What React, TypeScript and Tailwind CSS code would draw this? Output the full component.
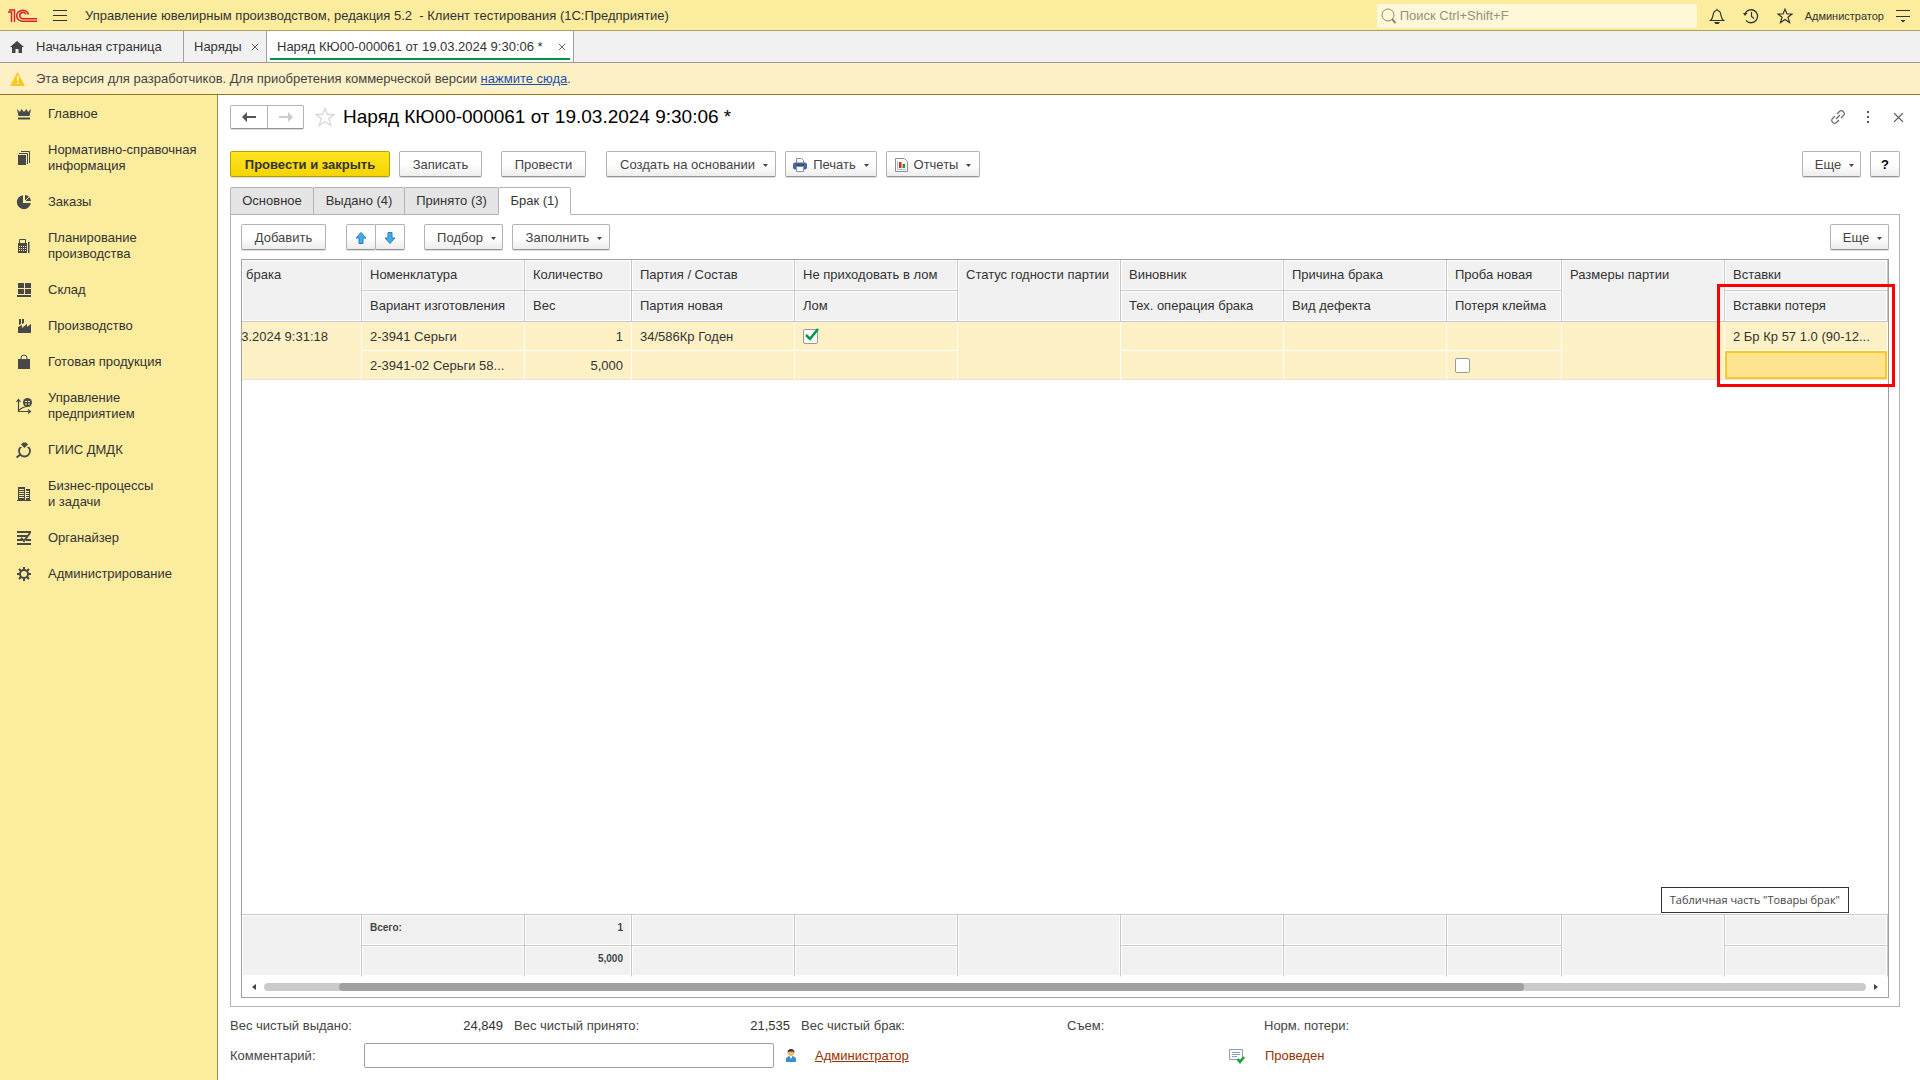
import type { ReactNode } from "react";
import clsx from "clsx";

const buttonClass =
  "flex h-[26px] shrink-0 items-center justify-center rounded-xs border border-[#b3b3b3] border-b-[#959595] bg-linear-to-b from-white from-50% to-[#ededed] pt-px text-[#444] shadow-[0_1px_0_#dcdcdc]";

const Caret = () => (
  <svg width="5" height="3" viewBox="0 0 5 3" className="mt-0.5 ml-2 shrink-0" fill="#444">
    <path d="M0 0h5L2.5 3z" />
  </svg>
);

interface ButtonProps {
  width: string;
  children: ReactNode;
  menu?: boolean;
  label?: string;
}

const Button = ({ width, children, menu, label }: ButtonProps) => (
  <button type="button" aria-label={label} className={clsx(buttonClass, width, menu && "pl-1.5")}>
    {children}
    {menu && <Caret />}
  </button>
);

interface MenuItem {
  lines: string[];
  icon: ReactNode;
}

const menuItems: MenuItem[] = [
  {
    lines: ["Главное"],
    icon: (
      <>
        <path d="M1 3l3 3 1.500-3L8 6l2.500-3L12 6l3-3-1.500 7h-11z" />
        <path d="M2 11.500h12v2H2z" />
      </>
    ),
  },
  {
    lines: ["Нормативно-справочная", "информация"],
    icon: (
      <>
        <path d="M2 5h8v10H2z" />
        <path d="M3 3.500h8.500V14M5 1.500h8.500V13" fill="none" stroke="#484848" />
      </>
    ),
  },
  {
    lines: ["Заказы"],
    icon: (
      <>
        <path d="M7 1.200V9h7.8A7 7 0 1 1 7 1.200z" />
        <path d="M9 1a6 6 0 0 1 5.800 6H9z" />
        <path d="M9 7l4-4" stroke="#fbec9e" />
      </>
    ),
  },
  {
    lines: ["Планирование", "производства"],
    icon: (
      <>
        <path d="M3.500 6V1.500h6V6" fill="none" stroke="#484848" />
        <path d="M2 5h9v10H2z" />
        <path d="M12 4h1.500v11H12z" />
        <path d="M3 8h1v1H3zm2 0h1v1H5zm2 0h1v1H7zm2 0h1v1H9zm-6 2h1v1H3zm2 0h1v1H5zm2 0h1v1H7zm2 0h1v1H9zm-6 2h1v1H3zm2 0h1v1H5zm2 0h1v1H7zm2 0h1v1H9z" fill="#fbec9e" />
      </>
    ),
  },
  {
    lines: ["Склад"],
    icon: <path d="M2 1h6v5H2zm7 0h6v5H9zM2 7h6v5H2zm7 0h6v5H9zM1 13h14v2H1z" />,
  },
  {
    lines: ["Производство"],
    icon: <path d="M2 15V9l4-2v3l5-4v3l4-3v9zM3 1h2v5L3 7zm3 0h2v4L6 6z" />,
  },
  {
    lines: ["Готовая продукция"],
    icon: (
      <>
        <path d="M2 5h12v10H2z" />
        <path d="M5 7V4a3 3 0 0 1 6 0v3" fill="none" stroke="#484848" />
      </>
    ),
  },
  {
    lines: ["Управление", "предприятием"],
    icon: (
      <>
        <path d="M2.500 1.500v12H14M.500 4l2-2.500 2 2.500M12 11.500l2.500 2-2.500 2M3 12l4-2.500L12 8" fill="none" stroke="#484848" strokeWidth="1.200" />
        <circle cx="11.500" cy="4.500" r="4.500" />
        <path d="M9 3h2v1H9zm3 0h2v1h-2zM9 5.500h2v1H9zm3 0h2v1h-2z" fill="#fbec9e" />
      </>
    ),
  },
  {
    lines: ["ГИИС ДМДК"],
    icon: (
      <>
        <circle cx="8.500" cy="9" r="5.500" fill="none" stroke="#484848" strokeWidth="1.800" />
        <path d="M4 3h9v2H4z" fill="#fbec9e" />
        <path d="M5 2.500L7 .500h3l2 2L8.500 6z" />
        <path d="M4.500 12.500L.500 15.500" stroke="#484848" strokeWidth="2" />
      </>
    ),
  },
  {
    lines: ["Бизнес-процессы", "и задачи"],
    icon: (
      <>
        <path d="M2 1h7v14H2zM10 3h4v12h-4zM1 14h14v1H1z" />
        <path d="M3 3h5v1H3zm0 2h5v1H3zm0 2h5v1H3zm0 2h5v1H3zm0 2h5v1H3zm7-6h3v1h-3zm0 2h3v1h-3zm0 2h3v1h-3zm0 2h3v1h-3z" fill="#fbec9e" />
      </>
    ),
  },
  {
    lines: ["Органайзер"],
    icon: (
      <>
        <path d="M1 1h14v2H1zM1 5h10v2H1zM1 9h5v2H1zM10 9h5v2h-5zM1 13h14v2H1z" />
        <path d="M5 8l3 3 6-8" fill="none" stroke="#484848" strokeWidth="2" />
      </>
    ),
  },
  {
    lines: ["Администрирование"],
    icon: (
      <>
        <circle cx="8" cy="8" r="4" fill="none" stroke="#484848" strokeWidth="2" />
        <path d="M8 1v3M8 12v3M1 8h3M12 8h3M3 3l2 2M11 11l2 2M13 3l-2 2M5 11l-2 2" stroke="#484848" strokeWidth="2" />
      </>
    ),
  },
];

const TopBar = () => (
  <header className="flex h-[31px] shrink-0 items-center border-b border-[#aaa15f] bg-[#fbec9e] pt-px pr-2.5 pl-2">
    <svg width="30" height="14" viewBox="0 0 30 14" fill="none" stroke="#d8202a" strokeWidth="1.500" aria-label="1С">
      <path d="M0 3h3.500v10M1 1h5.500v12" />
      <path d="M20.500 5.500a6 5.500 0 1 0-5.500 6.800h14" />
      <path d="M18 5.500a3.200 3.200 0 1 0-3 4.300h14" />
    </svg>
    <button type="button" aria-label="Меню" className="ml-[15px]">
      <svg width="14" height="12" viewBox="0 0 14 12" stroke="#333">
        <path d="M0 .500h14M0 5.500h14M0 10.500h14" />
      </svg>
    </button>
    <span className="ml-[18px] flex-1 whitespace-pre text-[#333]">
      {"Управление ювелирным производством, редакция 5.2  - Клиент тестирования (1С:Предприятие)"}
    </span>
    <label className="mr-3 flex h-6 w-80 items-center gap-1 rounded-xs bg-[#fef7d8] pl-1">
      <svg width="15" height="16" viewBox="0 0 15 16" fill="none" stroke="#8f8a73">
        <circle cx="7" cy="7" r="6" />
        <path d="M11 11l3.500 4" strokeWidth="2" />
      </svg>
      <input
        type="text"
        aria-label="Поиск"
        placeholder="Поиск Ctrl+Shift+F"
        className="min-w-0 flex-1 outline-none placeholder:text-[#96927f]"
      />
    </label>
    <button type="button" aria-label="Оповещения">
      <svg width="16" height="16" viewBox="0 0 16 16" fill="none" stroke="#333" strokeWidth="1.200">
        <path d="M1.500 12.500h13c-3-2-2-6-3.500-8.500-.800-1.200-2-1-3-2.500-1 1.500-2.200 1.300-3 2.500C3.500 6.500 4.500 10.500 1.500 12.500z" />
        <path d="M5 14h6l-1.500 2h-3z" fill="#333" stroke="none" />
      </svg>
    </button>
    <button type="button" aria-label="История" className="ml-[18px]">
      <svg width="16" height="16" viewBox="0 0 16 16" fill="none" stroke="#333">
        <path d="M2 6a6.500 6.500 0 1 1 1 6.300" strokeWidth="1.300" />
        <path d="M8.500 4v4.500l2.500 2" strokeWidth="1.200" />
        <path d="M0 5h4.500L2 8z" fill="#333" stroke="none" />
      </svg>
    </button>
    <button type="button" aria-label="Избранное" className="ml-[18px]">
      <svg width="16" height="16" viewBox="0 0 16 16" fill="none" stroke="#333" strokeWidth="1.200">
        <path d="M8 1.200l2 4.800h5l-4 3.300 1.500 5.200L8 11.500l-4.500 3L5 9.300 1 6h5z" />
      </svg>
    </button>
    <span className="ml-3 text-[11px] text-[#333]">Администратор</span>
    <button type="button" aria-label="Настройки" className="ml-3">
      <svg width="14" height="14" viewBox="0 0 14 14" stroke="#333">
        <path d="M0 1.500h14M0 7.500h14" />
        <path d="M4.500 11h5L7 13.500z" fill="#333" stroke="none" />
      </svg>
    </button>
  </header>
);

const CloseIcon = ({ size }: { size: number }) => (
  <svg width={size} height={size} viewBox="0 0 10 10" stroke="#555" strokeWidth="1.100">
    <path d="M1 1l8 8M9 1L1 9" />
  </svg>
);

const WindowTabs = () => (
  <nav className="flex h-8 shrink-0 border-b border-[#999] bg-[#f1f1f1] text-[#333]">
    <button type="button" className="flex w-[184px] items-center gap-3 border-r border-[#a0a0a0] pl-2.5">
      <svg width="14" height="14" viewBox="0 0 14 14" fill="#444">
        <path d="M7 1l7 6h-2v6H8.500V9h-3v4H2V7H0z" />
      </svg>
      Начальная страница
    </button>
    <div className="flex w-[83px] items-center justify-between border-r border-[#a0a0a0] pr-[7px] pl-2.5">
      <button type="button">Наряды</button>
      <button type="button" aria-label="Закрыть Наряды">
        <CloseIcon size={8} />
      </button>
    </div>
    <div className="flex w-[307px] border-r border-[#a0a0a0] bg-white px-[3px]">
      <div className="mb-0.5 flex flex-1 items-center justify-between border-b-2 border-[#009646] pt-1 pr-1 pl-[7px]">
        <button type="button">Наряд КЮ00-000061 от 19.03.2024 9:30:06 *</button>
        <button type="button" aria-label="Закрыть Наряд">
          <CloseIcon size={8} />
        </button>
      </div>
    </div>
  </nav>
);

const Notice = () => (
  <div className="flex h-8 shrink-0 items-center border-b border-[#947a1e] bg-[#fff1c6] pl-2.5 text-[#444]">
    <svg width="15" height="14" viewBox="0 0 15 14" className="mr-[11px]">
      <path d="M7.500 0L15 14H0z" fill="#fcc81e" />
      <path d="M7 4h1.500v5H7zM7 10.500h1.500V12H7z" fill="#fff" />
    </svg>
    <p>
      Эта версия для разработчиков. Для приобретения коммерческой версии{" "}
      <a href="#" className="text-[#1a4fb0] underline">
        нажмите сюда
      </a>
      .
    </p>
  </div>
);

const Sidebar = () => (
  <nav className="w-[218px] shrink-0 border-r border-[#958b51] bg-[#fbec9e] pt-px text-[#333]">
    {menuItems.map((item) => (
      <a key={item.lines[0]} href="#" className="flex items-center gap-4 py-2.5 pl-4">
        <svg width="16" height="16" viewBox="0 0 16 16" fill="#484848" className="shrink-0">
          {item.icon}
        </svg>
        <span>
          {item.lines.map((line) => (
            <span key={line} className="block">
              {line}
            </span>
          ))}
        </span>
      </a>
    ))}
  </nav>
);

const FormHeader = () => (
  <div className="flex items-center">
    <div className="flex h-6 rounded-xs border border-[#b3b3b3] border-b-[#959595] shadow-[0_1px_0_#dcdcdc]">
      <button type="button" aria-label="Назад" className="grid w-[37px] place-items-center border-r border-[#b3b3b3]">
        <svg width="14" height="10" viewBox="0 0 14 10" fill="#555">
          <path d="M0 5l5-5v4h9v2H5v4z" />
        </svg>
      </button>
      <button type="button" aria-label="Вперед" className="grid w-[35px] place-items-center">
        <svg width="14" height="10" viewBox="0 0 14 10" fill="#ccc">
          <path d="M14 5L9 0v4H0v2h9v4z" />
        </svg>
      </button>
    </div>
    <button type="button" aria-label="В избранное" className="ml-[11px]">
      <svg width="20" height="20" viewBox="0 0 20 20" fill="none" stroke="#d8d8d8" strokeWidth="1.300">
        <path d="M10 1.500l2.500 6H19l-5.200 4.200 2 6.800L10 14.500l-5.800 4 2-6.800L1 7.500h6.500z" />
      </svg>
    </button>
    <h1 className="ml-2 flex-1 text-[19px] leading-6 text-black">Наряд КЮ00-000061 от 19.03.2024 9:30:06 *</h1>
    <div className="-mr-1 flex items-center">
      <button type="button" aria-label="Ссылка">
        <svg width="16" height="16" viewBox="0 0 16 16" fill="none" stroke="#666" strokeWidth="1.200">
          <path d="M7 5l3-3a3 3 0 0 1 4 4l-3 3M9 11l-3 3a3 3 0 0 1-4-4l3-3M6 10l4-4" />
        </svg>
      </button>
      <button type="button" aria-label="Действия" className="ml-5">
        <svg width="4" height="12" viewBox="0 0 4 12" fill="#555">
          <path d="M1 0h2v2H1zm0 5h2v2H1zm0 5h2v2H1z" />
        </svg>
      </button>
      <button type="button" aria-label="Закрыть" className="ml-[23px]">
        <CloseIcon size={11} />
      </button>
    </div>
  </div>
);

const CommandBar = () => (
  <div className="mt-[22px] flex">
    <button
      type="button"
      className="h-[26px] w-40 shrink-0 rounded-xs border border-[#b59e00] bg-linear-to-b from-[#ffe51e] to-[#f5d400] pt-px font-bold text-[#333] shadow-[0_1px_0_#dcdcdc]"
    >
      Провести и закрыть
    </button>
    <div className="ml-[9px] flex">
      <Button width="w-[83px]">Записать</Button>
    </div>
    <div className="ml-[19px] flex">
      <Button width="w-[85px]">Провести</Button>
    </div>
    <div className="ml-5 flex gap-[9px]">
      <Button width="w-[170px]" menu>
        Создать на основании
      </Button>
      <Button width="w-[92px]" menu>
        <svg width="14" height="14" viewBox="0 0 14 14" className="mr-1.5 -ml-1.5 shrink-0">
          <path d="M3.500 5V.500h5l2 2V5" fill="#fff" stroke="#8391a3" />
          <rect y="4.500" width="14" height="7" rx="2" fill="#446c99" />
          <path d="M3 7h8" stroke="#223b5c" />
          <path d="M3.500 8.500h7v5h-7z" fill="#fff" stroke="#8391a3" />
        </svg>
        Печать
      </Button>
      <Button width="w-[94px]" menu>
        <svg width="13" height="14" viewBox="0 0 13 14" className="mr-1.5 -ml-1.5 shrink-0">
          <path d="M.500 .500h9l3 3v10H.500z" fill="#fff" stroke="#8391a3" />
          <path d="M2.500 3v8.500H11" fill="none" stroke="#b8c0c9" />
          <path d="M4 4h2.500v6H4z" fill="#e8251f" />
          <path d="M7.500 6H10v4H7.500z" fill="#1c9a33" />
        </svg>
        Отчеты
      </Button>
    </div>
    <div className="ml-auto flex gap-[9px]">
      <Button width="w-[59px]" menu>
        Еще
      </Button>
      <Button width="w-[30px]" label="Справка">
        <span className="font-bold text-black">?</span>
      </Button>
    </div>
  </div>
);

const formTabs = [
  { title: "Основное", width: "w-[84px]" },
  { title: "Выдано (4)", width: "w-[92px]" },
  { title: "Принято (3)", width: "w-[95px]" },
  { title: "Брак (1)", width: "w-[73px]", active: true },
];

const FormTabs = () => (
  <div role="tablist" className="relative z-10 mt-2.5 -mb-px flex">
    {formTabs.map((tab) => (
      <button
        key={tab.title}
        type="button"
        role="tab"
        aria-selected={Boolean(tab.active)}
        className={clsx(
          "-mr-px h-7 rounded-t-xs border border-[#b3b3b3] text-[#333]",
          tab.width,
          tab.active ? "border-b-white bg-white" : "bg-[#e5e5e5]",
        )}
      >
        {tab.title}
      </button>
    ))}
  </div>
);

const TableBar = () => (
  <div className="flex">
    <Button width="w-[85px]">Добавить</Button>
    <div className="ml-5 flex">
      <Button width="w-[30px]" label="Переместить вверх">
        <svg width="12" height="12" viewBox="0 0 12 12" fill="#41adeb" stroke="#2b7fb5">
          <path d="M6 .500L11 6H8v5.500H4V6H1z" />
        </svg>
      </Button>
      <div className="-ml-px flex">
        <Button width="w-[30px]" label="Переместить вниз">
          <svg width="12" height="12" viewBox="0 0 12 12" fill="#41adeb" stroke="#2b7fb5">
            <path d="M6 11.500L1 6h3V.500h4V6h3z" />
          </svg>
        </Button>
      </div>
    </div>
    <div className="ml-[19px] flex gap-[9px]">
      <Button width="w-[79px]" menu>
        Подбор
      </Button>
      <Button width="w-[98px]" menu>
        Заполнить
      </Button>
    </div>
    <div className="ml-auto flex">
      <Button width="w-[59px]" menu>
        Еще
      </Button>
    </div>
  </div>
);

interface Column {
  top: string;
  bottom?: string;
}

const columns: Column[] = [
  { top: "брака" },
  { top: "Номенклатура", bottom: "Вариант изготовления" },
  { top: "Количество", bottom: "Вес" },
  { top: "Партия / Состав", bottom: "Партия новая" },
  { top: "Не приходовать в лом", bottom: "Лом" },
  { top: "Статус годности партии" },
  { top: "Виновник", bottom: "Тех. операция брака" },
  { top: "Причина брака", bottom: "Вид дефекта" },
  { top: "Проба новая", bottom: "Потеря клейма" },
  { top: "Размеры партии" },
  { top: "Вставки", bottom: "Вставки потеря" },
];

const Columns = () => (
  <colgroup>
    <col className="w-[120px]" />
    <col className="w-[163px]" />
    <col className="w-[107px]" />
    <col className="w-[163px]" />
    <col className="w-[163px]" />
    <col className="w-[163px]" />
    <col className="w-[163px]" />
    <col className="w-[163px]" />
    <col className="w-[115px]" />
    <col className="w-[163px]" />
    <col className="w-[163px]" />
  </colgroup>
);

const tableClass = "w-full table-fixed border-separate border-spacing-0";
const headClass =
  "h-[31px] overflow-hidden border-r border-b border-[#c8c8c8] bg-[#f1f1f1] px-2 text-left font-normal whitespace-nowrap text-[#333] shadow-[inset_0_0_0_1px_#fff]";
const bodyClass =
  "h-[29px] truncate border-r border-b border-white bg-[#fff1c6] px-2 pt-px pb-0 text-[#333]";
const lastRowClass = "border-b-[#e3e3e3]";
const footClass =
  "h-[31px] border-r border-b border-[#c8c8c8] bg-[#f1f1f1] px-2 pb-1 text-[10px] font-bold text-[#444] shadow-[inset_0_0_0_1px_#fff]";

const Tick = ({ label, checked }: { label: string; checked?: boolean }) => (
  <span className="relative block size-[15px]">
    <input
      type="checkbox"
      aria-label={label}
      defaultChecked={checked}
      className="block size-[15px] appearance-none rounded-xs border border-[#999] bg-white"
    />
    {checked && (
      <svg width="15" height="15" viewBox="0 0 15 15" className="pointer-events-none absolute -top-px left-px" fill="none">
        <path d="M2 7l4 4 8-10" stroke="#009646" strokeWidth="2.500" />
      </svg>
    )}
  </span>
);

const GoodsTable = () => (
  <table className={tableClass}>
    <Columns />
    <thead>
      <tr>
        {columns.map((column, index) => (
          <th
            key={column.top}
            rowSpan={column.bottom ? 1 : 2}
            className={clsx(headClass, !column.bottom && "align-top leading-[29px]", index === 0 && "pl-1")}
          >
            {column.top}
          </th>
        ))}
      </tr>
      <tr>
        {columns
          .filter((column) => column.bottom)
          .map((column) => (
            <th key={column.bottom} className={headClass}>
              {column.bottom}
            </th>
          ))}
      </tr>
    </thead>
    <tbody>
      <tr>
        <td rowSpan={2} className={clsx(bodyClass, lastRowClass, "pl-0 align-top")}>
          <div className="flex w-[86px] justify-end overflow-hidden leading-7 whitespace-nowrap">3.2024 9:31:18</div>
        </td>
        <td className={bodyClass}>2-3941 Серьги</td>
        <td className={clsx(bodyClass, "text-right")}>1</td>
        <td className={bodyClass}>34/586Кр Годен</td>
        <td className={bodyClass}>
          <Tick label="Не приходовать в лом" checked />
        </td>
        <td rowSpan={2} className={clsx(bodyClass, lastRowClass)} />
        <td className={bodyClass} />
        <td className={bodyClass} />
        <td className={bodyClass} />
        <td rowSpan={2} className={clsx(bodyClass, lastRowClass)} />
        <td className={bodyClass}>2 Бр Кр 57 1.0 (90-12...</td>
      </tr>
      <tr>
        <td className={clsx(bodyClass, lastRowClass)}>2-3941-02 Серьги 58...</td>
        <td className={clsx(bodyClass, lastRowClass, "text-right")}>5,000</td>
        <td className={clsx(bodyClass, lastRowClass)} />
        <td className={clsx(bodyClass, lastRowClass)} />
        <td className={clsx(bodyClass, lastRowClass)} />
        <td className={clsx(bodyClass, lastRowClass)} />
        <td className={clsx(bodyClass, lastRowClass)}>
          <Tick label="Потеря клейма" />
        </td>
        <td className="h-[29px] border-r border-b border-white border-b-[#e3e3e3] bg-[#ffe48f] shadow-[inset_0_0_0_2px_#fac823]" />
      </tr>
    </tbody>
  </table>
);

const totals: Record<string, [string, string]> = {
  Номенклатура: ["Всего:", ""],
  Количество: ["1", "5,000"],
};

const TotalsTable = () => (
  <table className={clsx(tableClass, "border-t border-[#c8c8c8]")}>
    <Columns />
    <tbody>
      <tr>
        {columns.map((column) => (
          <td
            key={column.top}
            rowSpan={column.bottom ? 1 : 2}
            className={clsx(
              footClass,
              column.top === "Количество" && "text-right",
              !column.bottom && "border-b-white",
            )}
          >
            {totals[column.top]?.[0]}
          </td>
        ))}
      </tr>
      <tr>
        {columns
          .filter((column) => column.bottom)
          .map((column) => (
            <td
              key={column.top}
              className={clsx(footClass, "border-b-white", column.top === "Количество" && "text-right")}
            >
              {totals[column.top]?.[1]}
            </td>
          ))}
      </tr>
    </tbody>
  </table>
);

const ScrollBar = () => (
  <div className="flex h-5 items-center gap-2 px-2.5">
    <svg width="4" height="6" viewBox="0 0 4 6" fill="#444">
      <path d="M4 0v6L0 3z" />
    </svg>
    <div className="flex h-2 flex-1 rounded-full bg-[#cbcbcb]">
      <div className="w-[75px]" />
      <div className="w-[74%] rounded-full bg-[#a0a0a0]" />
    </div>
    <svg width="4" height="6" viewBox="0 0 4 6" fill="#444">
      <path d="M0 0v6l4-3z" />
    </svg>
  </div>
);

const Summary = () => (
  <footer className="flex flex-col gap-[5px] pt-[7px] pb-3 text-[#444]">
    <div className="flex h-6 items-center">
      <span className="w-[170px]">Вес чистый выдано:</span>
      <span className="w-[103px] text-right text-[#333]">24,849</span>
      <span className="ml-[11px] w-[180px]">Вес чистый принято:</span>
      <span className="w-[96px] text-right text-[#333]">21,535</span>
      <span className="ml-[11px] w-[266px]">Вес чистый брак:</span>
      <span className="w-[197px]">Съем:</span>
      <span>Норм. потери:</span>
    </div>
    <div className="flex h-[25px] items-center">
      <label htmlFor="comment" className="w-[134px]">
        Комментарий:
      </label>
      <input id="comment" type="text" className="h-[25px] w-[410px] rounded-xs border border-[#a0a0a0] px-2 outline-none" />
      <svg width="10" height="13" viewBox="0 0 10 13" className="ml-3">
        <path d="M0 13V9l3-2h4l3 2v4z" fill="#3a8fc6" />
        <path d="M3.500 7h3L5 10z" fill="#fff" />
        <circle cx="5" cy="4" r="3" fill="#f0b663" />
        <path d="M1.500 4a3.500 4 0 0 1 7 0L7 2.500H3z" fill="#333" />
      </svg>
      <a href="#" className="ml-[19px] w-[414px] text-[#963200] underline">
        Администратор
      </a>
      <svg width="16" height="16" viewBox="0 0 16 16">
        <path d="M.500 1.500h13v10H.500z" fill="#fff" stroke="#8c9fb8" />
        <path d="M3 4.500h8M3 6.500h8M3 8.500h5" stroke="#8c9fb8" />
        <path d="M8.500 11l2.500 3 4-5" fill="none" stroke="#1fa035" strokeWidth="2.500" />
      </svg>
      <span className="ml-5 text-[#963200]">Проведен</span>
    </div>
  </footer>
);

const App = () => (
  <div className="flex min-h-screen flex-col bg-white font-['Liberation_Sans',sans-serif] text-[13px] leading-4">
    <TopBar />
    <WindowTabs />
    <Notice />
    <div className="flex flex-1">
      <Sidebar />
      <main className="flex min-w-0 flex-1 flex-col pt-2.5 pr-5 pl-3">
        <FormHeader />
        <CommandBar />
        <FormTabs />
        <section className="flex flex-1 flex-col border border-[#b3b3b3] px-2.5 pt-[9px] pb-2">
          <TableBar />
          <div className="relative mt-[9px] flex flex-1 flex-col border border-[#a0a0a0]">
            <GoodsTable />
            <div className="flex-1" />
            <TotalsTable />
            <ScrollBar />
            <div className="pointer-events-none absolute top-6 -right-[7px] h-[103px] w-[178px] border-3 border-[#ff0000]" />
            <div
              role="tooltip"
              className="absolute right-[39px] bottom-[84px] flex h-[26px] items-center border border-[#333] bg-white px-2 font-['Open_Sans',sans-serif] text-[11px] text-[#444]"
            >
              Табличная часть "Товары брак"
            </div>
          </div>
        </section>
        <Summary />
      </main>
    </div>
  </div>
);

export default App;
